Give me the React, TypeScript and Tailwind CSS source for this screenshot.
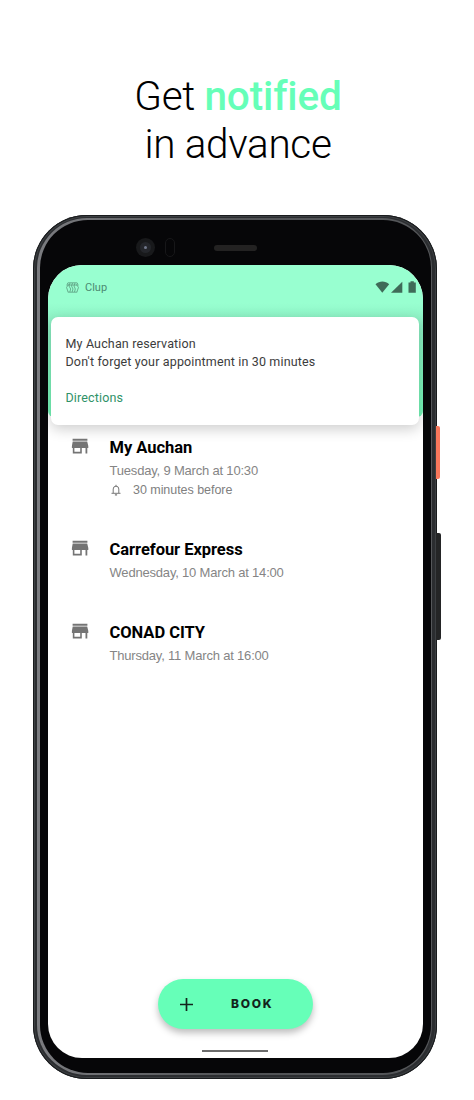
import React from "react";

function StoreIcon() {
  return (
    <svg className="mt-px h-[16px] w-[18px] shrink-0" viewBox="0 0 18 16" fill="#747474">
      <path d="M1.600 .8h14.800v2H1.600zM1.700 3.600h14.500l1.100 4.300v2.100h-1v5.500h-1.800V10h-3.700v5.500H1.800V10H.9V7.900zM3.400 10v3.800h5.800V10z" fillRule="evenodd" />
    </svg>
  );
}

function BellIcon() {
  return (
    <svg className="h-[12px] w-[10px] shrink-0 -translate-y-px" viewBox="0 0 10 12" fill="none" stroke="#777" strokeWidth="1">
      <path d="M2.200 9V5a2.800 2.800 0 0 1 5.600 0v4M.5 9.300h9M5 2.200V.8" />
      <path d="M3.900 10.900h2.200" strokeWidth="1.300" />
    </svg>
  );
}

function BasketIcon() {
  return (
    <svg className="h-[11px] w-[13px]" viewBox="0 0 13 11" fill="none" stroke="#5a9a7e" strokeWidth=".8">
      <path d="M1.800 .8h9.400M1.800 10.200h9.400M.3 3h12.400" />
      <path d="M1.300 1 2.300 3 .5 5.300l1.600 4.700M11.700 1l-1 2 1.800 2.300-1.600 4.700" />
      <path d="M4 1l-1 3 1.700 3-.9 3M6.500 1l-1 3 1.500 3-.9 3M9 1 8 4l1.300 3-.8 3" />
    </svg>
  );
}

function StatusIcons() {
  return (
    <svg className="h-[13px] w-[42px]" viewBox="0 0 42 13" fill="#3f6b58">
      <path d="M.5 3.200C4.500-.3 10.300-.3 14.200 3.200L7.300 11.800z" />
      <path d="M27.300 .7v11.100H16z" />
      <path d="M33.500 1.500h2V.3h3.300v1.200h2v10.300h-7.300z" />
    </svg>
  );
}

type Item = { name: string; date: string; reminder?: string; box: string };

const items: Item[] = [
  { name: "My Auchan", date: "Tuesday, 9 March at 10:30", reminder: "30 minutes before", box: "h-[102px]" },
  { name: "Carrefour Express", date: "Wednesday, 10 March at 14:00", box: "h-[83px]" },
  { name: "CONAD CITY", date: "Thursday, 11 March at 16:00", box: "h-[83px]" },
];

function Reservation({ item }: { item: Item }) {
  return (
    <div className={`flex ${item.box}`}>
      <StoreIcon />
      <div className="ml-[20.500px] whitespace-nowrap">
        <div className="h-[24px] text-[16.500px] font-bold leading-[22px] tracking-[-0.04px] text-black">{item.name}</div>
        <div className="h-[19px] font-['Liberation_Sans',sans-serif] text-[13px] leading-[19px] tracking-[-0.19px] text-[#858585]">{item.date}</div>
        {item.reminder && (
          <div className="flex h-[21px] items-center pl-[1px] font-['Liberation_Sans',sans-serif] text-[12.500px] leading-[21px] tracking-[-0.04px] text-[#808080]">
            <BellIcon />
            <span className="ml-[12.500px]">{item.reminder}</span>
          </div>
        )}
      </div>
    </div>
  );
}

export default function App() {
  return (
    <div className="h-[1100px] w-[474px] overflow-hidden bg-white font-['Roboto',sans-serif]">
      <h1 className="h-[215px] pt-[72px] pl-[2px] text-center text-[40.500px] font-light leading-[48px] tracking-[-0.35px] text-black [font-variant-ligatures:none]">
        <div>Get <span className="font-medium tracking-[-0.15px] text-[#66ffb8]">notified</span></div>
        <div>in advance</div>
      </h1>

      <div className="relative ml-[33px] h-[864px] w-[404px] rounded-[54px] bg-[#2b2d30] shadow-[inset_0_0_0_1px_#191b1d,inset_0_0_0_2px_#3c3f42]">
        <div className="absolute left-[403px] top-[211px] h-[53px] w-[4px] rounded-r-[2px] bg-[#f8775b]" />
        <div className="absolute left-[403px] top-[318px] h-[107px] w-[5px] rounded-r-[2px] bg-[#242526]" />
        <div className="h-full rounded-[54px] pt-[3px] pr-[5px] pb-[4px] pl-[4px]">
          <div className="h-full rounded-[50px] bg-linear-to-r from-[#7b7c80] via-[#505255] to-[#55575a] pt-[2px] pr-px pb-[2px] pl-[3px]">
            <div className="flex h-full flex-col rounded-[48px] bg-[#060608] px-[8px]">
              <div className="flex h-[45px] shrink-0 items-center pt-[10px]">
                <div className="ml-[88px] flex h-[19px] w-[19px] items-center justify-center rounded-full bg-[#18191b]">
                  <div className="flex h-[11px] w-[11px] items-center justify-center rounded-full bg-[#24262b]">
                    <div className="h-[3px] w-[3px] rounded-full bg-[#72798c]" />
                  </div>
                </div>
                <div className="ml-[10px] h-[19px] w-[10px] rounded-full border border-[#171719]" />
                <div className="ml-[39px] h-[6px] w-[43px] rounded-full bg-[#232222]" />
              </div>

              <div className="flex h-[793px] w-[375px] flex-col overflow-hidden rounded-[34px] bg-white">
                <div className="h-[152px] shrink-0 rounded-b-[6px] bg-linear-to-b from-[#98ffd0] from-25% via-[#8bedc2] via-40% to-[#73f5b6]">
                  <div className="flex h-[52px] items-center pl-[18px] pr-[6px] text-[#4c8a70]">
                    <div className="flex w-full -translate-y-[4px] items-center">
                      <BasketIcon />
                      <span className="ml-[6px] flex-1 translate-y-px text-[11px] leading-[14px]">Clup</span>
                      <StatusIcons />
                    </div>
                  </div>
                  <div className="ml-[3px] h-[108px] w-[368px] rounded-[7px] bg-white pl-[14.500px] pt-[18px] text-[12.500px] leading-[18px] tracking-[0.15px] text-[#3c3c3c] shadow-[0_4px_14px_rgba(0,0,0,0.2)]">
                    <div>My Auchan reservation</div>
                    <div>Don't forget your appointment in 30 minutes</div>
                    <div className="mt-[18px] text-[#2f9268]">Directions</div>
                  </div>
                </div>

                <div className="pl-[23px] pt-[20px]">
                  {items.map((item) => <Reservation key={item.name} item={item} />)}
                </div>

                <div className="mt-auto flex flex-col items-center">
                  <button className="flex h-[50px] w-[155px] items-center rounded-full bg-[#66ffb8] pl-[22px] text-[#13251c] shadow-[0_4px_7px_rgba(0,0,0,0.26)]">
                    <svg className="h-[13px] w-[13px]" viewBox="0 0 13 13" stroke="#13251c" strokeWidth="1.700"><path d="M6.500 0v13M0 6.500h13" /></svg>
                    <span className="ml-[38px] font-['Inter',sans-serif] text-[12px] font-extrabold tracking-[1.700px]">BOOK</span>
                  </button>
                  <div className="mb-[6px] mr-px mt-[21px] h-[2px] w-[66px] bg-[#6c6c6c]" />
                </div>
              </div>
            </div>
          </div>
        </div>
      </div>
    </div>
  );
}
